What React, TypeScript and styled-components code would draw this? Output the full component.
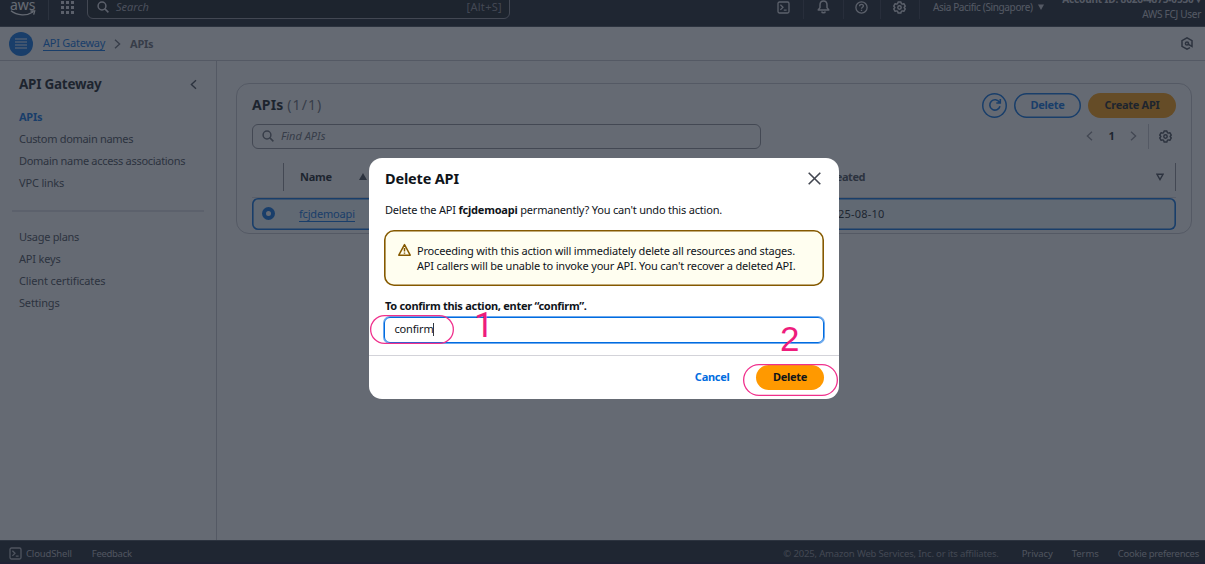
import React from "react";
import styled, { createGlobalStyle, css } from "styled-components";

const Global = createGlobalStyle`
  * { box-sizing: border-box; }
  body { margin: 0; overflow: hidden; background: #fff; }
  svg { display: block; flex: none; }
`;

const Page = styled.div`
  position: relative;
  width: 1205px;
  height: 564px;
  display: flex;
  flex-direction: column;
  overflow: hidden;
  background: #fff;
  color: #0f141a;
  font-family: "Noto Sans", "Open Sans", sans-serif;
  font-size: 11px;
  line-height: 16px;
  white-space: nowrap;
`;

const Text = styled.span<{
  $size?: number;
  $track?: number;
  $bold?: boolean;
  $italic?: boolean;
  $color?: string;
}>`
  font-size: ${(p) => p.$size ?? 11}px;
  letter-spacing: ${(p) => p.$track ?? (p.$bold ? -0.28 : -0.17)}px;
  font-weight: ${(p) => (p.$bold ? 700 : 400)};
  font-style: ${(p) => (p.$italic ? "italic" : "normal")};
  ${(p) => p.$color && css`color: ${p.$color};`}
`;

/* Top navigation */
const TopBar = styled.header`
  height: 27px;
  flex: none;
  display: flex;
  align-items: flex-end;
  overflow: hidden;
  background: #161d26;
  border-bottom: 1px solid #424650;
  color: #dedee3;
`;
const TopRow = styled.div`
  flex: 1;
  height: 38px;
  display: flex;
  align-items: center;
`;
const Logo = styled.div`
  width: 49px;
  height: 25px;
  padding-left: 10px;
  border-right: 1px solid #424650;
  display: flex;
  flex-direction: column;
  align-items: flex-start;
  justify-content: flex-end;
  padding-bottom: 4px;
  line-height: 11px;
`;
const AppsButton = styled.div`
  width: 38px;
  padding-right: 1px;
  display: flex;
  justify-content: center;
`;
const TopSearch = styled.div`
  width: 423px;
  height: 25px;
  margin-bottom: 1px;
  padding: 0 7px 0 9px;
  display: flex;
  align-items: center;
  gap: 7px;
  border: 1px solid #8c8c94;
  border-radius: 6px;
  background: #0f141a;
`;
const Spacer = styled.div`
  flex: 1;
`;
const TopIcon = styled.div<{ $w: number }>`
  width: ${(p) => p.$w}px;
  height: 24px;
  margin-left: 0;
  padding-right: 1px;
  display: flex;
  align-items: center;
  justify-content: center;
  border-right: 1px solid #333843;
`;
const Region = styled.div`
  width: 125px;
  margin-left: 13px;
  display: flex;
  align-items: center;
  gap: 5px;
`;
const Account = styled.div`
  width: 147px;
  padding: 0 4px 0 0;
  display: flex;
  flex-direction: column;
  align-items: flex-end;
  line-height: 15px;
`;

/* Breadcrumbs */
const Crumbs = styled.nav`
  height: 34px;
  flex: none;
  padding: 0 12px 0 9px;
  display: flex;
  align-items: center;
  border-bottom: 1px solid #c6c6cd;
`;
const MenuCircle = styled.div`
  width: 24px;
  height: 24px;
  margin-right: 10px;
  border-radius: 50%;
  display: flex;
  align-items: center;
  justify-content: center;
  background: #006ce0;
`;
const Link = styled(Text)`
  color: #006ce0;
  line-height: 14px;
  border-bottom: 1px solid #006ce0;
`;
const Chevron = styled.div`
  width: 25px;
  display: flex;
  justify-content: center;
`;

/* Body */
const Body = styled.div`
  flex: 1;
  display: flex;
`;
const Side = styled.aside`
  width: 217px;
  padding: 13px 12px 0;
  border-right: 1px solid #c6c6cd;
`;
const SideHead = styled.div`
  height: 22px;
  margin-bottom: 10px;
  padding: 0 7px 2px 7px;
  display: flex;
  align-items: center;
  justify-content: space-between;
`;
const SideList = styled.ul`
  margin: 0;
  padding: 0 0 0 7px;
  list-style: none;
  color: #424650;
`;
const SideItem = styled.li`
  height: 21.9px;
  display: flex;
  align-items: center;
`;
const SideRule = styled.div`
  height: 2px;
  margin: 16px 0 14.5px;
  background: #c6c6cd;
  opacity: 0.5;
`;
const Main = styled.main`
  flex: 1;
  padding: 22px 13px 0 19px;
`;
const Panel = styled.section`
  height: 151px;
  padding: 8px 15px 0;
  border: 1px solid #c6c6cd;
  border-radius: 13px;
`;
const PanelHead = styled.div`
  height: 26px;
  display: flex;
  align-items: center;
  gap: 7px;
`;
const Button = styled.div<{ $w: number; $primary?: boolean }>`
  width: ${(p) => p.$w}px;
  height: 25px;
  border-radius: 13px;
  display: flex;
  align-items: center;
  justify-content: center;
  color: ${(p) => (p.$primary ? "#0f141a" : "#006ce0")};
  background: ${(p) => (p.$primary ? "#ff9900" : "transparent")};
  box-shadow: ${(p) => (p.$primary ? "none" : "inset 0 0 0 1.5px #006ce0")};
`;
const FilterRow = styled.div`
  height: 26px;
  margin-top: 5px;
  padding-right: 4px;
  display: flex;
  align-items: center;
`;
const FilterInput = styled.div`
  width: 509px;
  height: 25px;
  padding-left: 9px;
  display: flex;
  align-items: center;
  gap: 7px;
  border: 1px solid #8c8c94;
  border-radius: 6px;
`;
const Pager = styled.div`
  display: flex;
  align-items: center;
  color: #8c8c94;
`;
const PageNumber = styled.div`
  width: 37px;
  text-align: center;
  color: #0f141a;
`;
const Divider = styled.div`
  width: 1px;
  height: 25px;
  margin: 0 10px 0 11px;
  background: #c6c6cd;
`;
const TableHead = styled.div`
  height: 49px;
  padding-top: 7px;
  display: grid;
  grid-template-columns: 31px 542px 1fr;
  align-items: center;
  border-bottom: 1px solid #d5d5dc;
`;
const HeadCell = styled.div<{ $last?: boolean }>`
  height: 28px;
  padding: ${(p) => (p.$last ? "0 11px 0 0" : "0 0 0 16px")};
  display: flex;
  align-items: center;
  justify-content: ${(p) => (p.$last ? "space-between" : "flex-start")};
  gap: ${(p) => (p.$last ? 0 : 27)}px;
  border-left: ${(p) => (p.$last ? "0" : "1px solid #8c8c94")};
  border-right: ${(p) => (p.$last ? "1px solid #8c8c94" : "0")};
`;
const TableRow = styled.div`
  height: 32px;
  padding: 0 2px 1px;
  display: grid;
  grid-template-columns: 45px 526px 1fr;
  align-items: center;
  box-shadow: inset 0 0 0 1.6px #006ce0;
  border-radius: 6px;
  background: #f0fbff;
`;
const Radio = styled.div`
  width: 13px;
  height: 13px;
  margin-left: 8px;
  border: 4px solid #006ce0;
  border-radius: 50%;
  background: #fff;
`;

/* Footer */
const Footer = styled.footer`
  height: 24px;
  flex: none;
  padding: 4px 6px 0 9px;
  display: flex;
  align-items: center;
  background: #161d26;
  border-bottom: 2px solid #150b31;
  border-top: 1px solid #424650;
  color: #b4b4bb;
`;
const FooterText = styled(Text).attrs({ $size: 9.5 })<{ $gap?: number }>`
  margin-left: ${(p) => p.$gap ?? 0}px;
`;

/* Dialog */
const Overlay = styled.div`
  position: absolute;
  inset: 0;
  display: flex;
  align-items: flex-start;
  padding: 158px 0 0 369px;
  background: rgba(35, 43, 55, 0.7);
`;
const Dialog = styled.div`
  width: 470px;
  height: 241px;
  display: flex;
  flex-direction: column;
  border-radius: 13px;
  background: #fff;
`;
const DialogHead = styled.div`
  height: 42px;
  padding: 0 18px 2px 16px;
  display: flex;
  align-items: center;
  justify-content: space-between;
`;
const DialogBody = styled.div`
  flex: 1;
  padding: 2px 15px 0;
`;
const Line = styled.div`
  padding-left: 1px;
  height: 16px;
`;
const Alert = styled.div`
  height: 56px;
  margin: 12px 0;
  padding: 12.6px 14px 0;
  display: flex;
  gap: 6px;
  box-shadow: inset 0 0 0 1.6px #855900;
  border-radius: 10px;
  background: #fffef0;
`;
const AlertText = styled.div`
  display: flex;
  flex-direction: column;
  line-height: 15.2px;
`;
const Field = styled.div`
  height: 26px;
  margin-top: 3px;
  padding: 0 0 2px 9.5px;
  display: flex;
  align-items: center;
  border: 1px solid #006ce0;
  border-radius: 6px;
  box-shadow: 0 0 0 1px #6ba8ee;
`;
const Caret = styled.i`
  width: 1px;
  height: 13px;
  margin-left: -1px;
  background: #33383f;
`;
const DialogFoot = styled.div`
  height: 44px;
  padding: 0 15px 1px;
  display: flex;
  align-items: center;
  justify-content: flex-end;
  gap: 26.500px;
  border-top: 1px solid #d3d3d9;
`;

/* Step markers floating over the dialog */
const Ring = styled.div<{ $x: number; $y: number; $w: number; $h: number }>`
  position: absolute;
  left: ${(p) => p.$x}px;
  top: ${(p) => p.$y}px;
  width: ${(p) => p.$w}px;
  height: ${(p) => p.$h}px;
  box-shadow: inset 0 0 0 1.3px #f0308c;
  border-radius: 16px;
`;
const StepNumber = styled.div<{ $x: number; $y: number; $font?: string }>`
  position: absolute;
  left: ${(p) => p.$x}px;
  top: ${(p) => p.$y}px;
  font-family: ${(p) => p.$font ?? '"Liberation Sans"'}, Arial, sans-serif;
  font-size: 35px;
  line-height: 36px;
  color: #ee1c7c;
`;

const SearchIcon = ({ color }: { color: string }) => (
  <svg width="12" height="12" viewBox="0 0 12 12" fill="none" stroke={color} strokeWidth="1.5">
    <circle cx="5" cy="5" r="3.9" />
    <path d="M7.9 7.9 11.4 11.4" />
  </svg>
);
const GearIcon = ({ color }: { color: string }) => (
  <svg width="13" height="13" viewBox="0 0 16 16" fill="none" stroke={color} strokeWidth="1.8" strokeLinejoin="round">
    <path d="M6.3 1.2h3.4l.6 2 1.1.6 2-.5 1.7 2.9L13.7 8l1.4 1.8-1.7 2.9-2-.5-1.1.6-.6 2H6.300l-.6-2-1.100-.6-2 .5L.9 9.800 2.300 8 .9 6.200l1.700-2.900 2 .5 1.100-.6z" />
    <circle cx="8" cy="8" r="2.1" />
  </svg>
);
const TerminalIcon = ({ color }: { color: string }) => (
  <svg width="13" height="13" viewBox="0 0 13 13" fill="none" stroke={color} strokeWidth="1.3">
    <rect x="1" y="1" width="11" height="11" rx="1.5" />
    <path d="M3.4 3.7 6 6.3 3.4 8.9M6.8 9.2h2.8" />
  </svg>
);
const Angle = ({ dir, color, h = 10 }: { dir: "left" | "right"; color: string; h?: number }) => (
  <svg width="7" height={h} viewBox="0 0 7 10" fill="none" stroke={color} strokeWidth="1.4">
    <path d={dir === "left" ? "M6 .7 1.4 5 6 9.3" : "M1 .7 5.6 5 1 9.3"} />
  </svg>
);

export default function App() {
  return (
    <Page>
      <Global />
      <TopBar>
        <TopRow>
          <Logo>
            <Text $size={14} $track={-0.1} $color="#fff">aws</Text>
            <svg width="26" height="6" viewBox="0 0 26 6" fill="none" stroke="#fff" strokeWidth="1.3">
              <path d="M1 .8C7 5.8 17 6 23 2M20.5 1h4.2l-1 3.6" />
            </svg>
          </Logo>
          <AppsButton>
            <svg width="13" height="13" viewBox="0 0 13 13" fill="#dedee3">
              {[0, 5, 10].map((y) => [0, 5, 10].map((x) => <rect key={`${x}-${y}`} x={x} y={y} width="3" height="3" />))}
            </svg>
          </AppsButton>
          <TopSearch>
            <SearchIcon color="#dedee3" />
            <Text $italic $color="#a4a4ad" $track={0}>Search</Text>
            <Spacer />
            <Text $color="#8c8c94" $track={0.3}>[Alt+S]</Text>
          </TopSearch>
          <Spacer />
          <TopIcon $w={39}><TerminalIcon color="#dedee3" /></TopIcon>
          <TopIcon $w={40}>
            <svg width="13" height="14" viewBox="0 0 13 14" fill="none" stroke="#dedee3" strokeWidth="1.5" strokeLinejoin="round">
              <path d="M6.5 1C4 1 3 2.8 3 5v2.6L1.2 10h10.6L10 7.6V5c0-2.2-1-4-3.5-4zM4.7 11.5c.3 1.7 3.3 1.7 3.6 0" />
            </svg>
          </TopIcon>
          <TopIcon $w={37}>
            <svg width="13" height="13" viewBox="0 0 13 13" fill="none" stroke="#dedee3" strokeWidth="1.3">
              <circle cx="6.5" cy="6.5" r="5.6" />
              <path d="M4.6 5.2c0-2.5 3.8-2.3 3.8-.2 0 1.3-1.9 1.3-1.9 2.7M6.5 8.7v1.3" />
            </svg>
          </TopIcon>
          <TopIcon $w={39}><GearIcon color="#dedee3" /></TopIcon>
          <Region>
            <Text $size={10} $track={-0.36} $color="#c6c6cd">Asia Pacific (Singapore)</Text>
            <svg width="6" height="6" viewBox="0 0 6 6" fill="#c6c6cd"><path d="M0 .5h6L3 6z" /></svg>
          </Region>
          <Account>
            <Text $size={10} $bold $track={-0.14} $color="#c6c6cd">Account ID: 8626-4875-0530 ▾</Text>
            <Text $size={10} $track={-0.28} $color="#c6c6cd">AWS FCJ User</Text>
          </Account>
        </TopRow>
      </TopBar>

      <Crumbs>
        <MenuCircle>
          <svg width="12" height="11" viewBox="0 0 12 11" stroke="#fff" strokeWidth="1.2">
            <path d="M0 1h12M0 4h12M0 7h12M0 10h12" />
          </svg>
        </MenuCircle>
        <Link $track={-0.25}>API Gateway</Link>
        <Chevron><Angle dir="right" color="#656871" /></Chevron>
        <Text $bold $color="#656871">APIs</Text>
        <Spacer />
        <svg width="12" height="13" viewBox="0 0 12 13" fill="none" stroke="#424650" strokeWidth="1.5">
          <path d="M9 10.7 6 12.2 1 9.4V3.6L6 .8l5 2.8v5.8L6.5 6.8" />
          <circle cx="6" cy="6.5" r="1.6" />
        </svg>
      </Crumbs>

      <Body>
        <Side>
          <SideHead>
            <Text $size={13.5} $track={-0.26} $bold>API Gateway</Text>
            <Angle dir="left" color="#424650" h={11} />
          </SideHead>
          <SideList>
            <SideItem><Text $bold $color="#006ce0">APIs</Text></SideItem>
            <SideItem><Text $track={-0.3}>Custom domain names</Text></SideItem>
            <SideItem><Text $track={-0.3}>Domain name access associations</Text></SideItem>
            <SideItem><Text>VPC links</Text></SideItem>
          </SideList>
          <SideRule />
          <SideList>
            <SideItem><Text $track={-0.28}>Usage plans</Text></SideItem>
            <SideItem><Text>API keys</Text></SideItem>
            <SideItem><Text $track={-0.13}>Client certificates</Text></SideItem>
            <SideItem><Text>Settings</Text></SideItem>
          </SideList>
        </Side>
        <Main>
          <Panel>
            <PanelHead>
              <Text $size={14} $bold $track={0.15}>APIs <Text $size={14} $color="#656871" $track={1.1}>(1/1)</Text></Text>
              <Spacer />
              <Button $w={25}>
                <svg width="14" height="14" viewBox="0 0 14 14" fill="none" stroke="#006ce0" strokeWidth="1.6">
                  <path d="M12 8.3A5.2 5.2 0 1 1 11.5 4.3M12.3 1v4H8.3" />
                </svg>
              </Button>
              <Button $w={67}><Text $bold>Delete</Text></Button>
              <Button $w={88} $primary><Text $bold>Create API</Text></Button>
            </PanelHead>
            <FilterRow>
              <FilterInput>
                <SearchIcon color="#656871" />
                <Text $italic $color="#656871" $track={0}>Find APIs</Text>
              </FilterInput>
              <Spacer />
              <Pager>
                <Angle dir="left" color="#8c8c94" />
                <PageNumber><Text $bold>1</Text></PageNumber>
                <Angle dir="right" color="#8c8c94" />
              </Pager>
              <Divider />
              <GearIcon color="#424650" />
            </FilterRow>
            <TableHead>
              <span />
              <HeadCell>
                <Text $bold>Name</Text>
                <svg width="8" height="7" viewBox="0 0 8 7" fill="#424650"><path d="M0 7h8L4 0z" /></svg>
              </HeadCell>
              <HeadCell $last>
                <Text $bold $track={-0.45} $color="#424650">Created</Text>
                <svg width="8" height="8" viewBox="0 0 8 8" fill="none" stroke="#424650" strokeWidth="1.4"><path d="M1 1.3h6L4 6.5z" /></svg>
              </HeadCell>
            </TableHead>
            <TableRow>
              <Radio />
              <span><Link $track={-0.18}>fcjdemoapi</Link></span>
              <Text $track={0.2}>2025-08-10</Text>
            </TableRow>
          </Panel>
        </Main>
      </Body>

      <Footer>
        <TerminalIcon color="#b4b4bb" />
        <FooterText $gap={4} $track={-0.15}>CloudShell</FooterText>
        <FooterText $gap={20} $track={-0.3}>Feedback</FooterText>
        <Spacer />
        <FooterText $color="#8c8c94" $track={-0.16}>© 2025, Amazon Web Services, Inc. or its affiliates.</FooterText>
        <FooterText $gap={23} $track={-0.08}>Privacy</FooterText>
        <FooterText $gap={19} $track={-0.1}>Terms</FooterText>
        <FooterText $gap={19} $track={-0.25}>Cookie preferences</FooterText>
      </Footer>

      <Overlay>
        <Dialog>
          <DialogHead>
            <Text $size={14.5} $track={-0.18} $bold>Delete API</Text>
            <svg width="13" height="13" viewBox="0 0 13 13" stroke="#424650" strokeWidth="1.6"><path d="M.7.7l11.6 11.6M12.3.7.7 12.3" /></svg>
          </DialogHead>
          <DialogBody>
            <Line><Text $track={-0.2}>Delete the API <b>fcjdemoapi</b> permanently? You can't undo this action.</Text></Line>
            <Alert>
              <svg width="13" height="14" viewBox="0 0 13 14" fill="none" stroke="#855900" strokeWidth="1.5" strokeLinejoin="round">
                <path d="M6.5 1.6 12.2 12.2H.8zM6.5 5.1v3.300M6.5 9.400v1.400" />
              </svg>
              <AlertText>
                <Text $track={-0.18}>Proceeding with this action will immediately delete all resources and stages.</Text>
                <Text $track={-0.18}>API callers will be unable to invoke your API. You can't recover a deleted API.</Text>
              </AlertText>
            </Alert>
            <Line><Text $bold>To confirm this action, enter “confirm”.</Text></Line>
            <Field><Text>confirm</Text><Caret /></Field>
          </DialogBody>
          <DialogFoot>
            <Text $bold $color="#006ce0">Cancel</Text>
            <Button $w={68} $primary><Text $bold>Delete</Text></Button>
          </DialogFoot>
        </Dialog>
      </Overlay>

      <Ring $x={370} $y={315} $w={84} $h={29} />
      <Ring $x={743} $y={364} $w={95} $h={32} />
      <StepNumber $x={474} $y={308} $font="Roboto">1</StepNumber>
      <StepNumber $x={780} $y={321}>2</StepNumber>
    </Page>
  );
}
